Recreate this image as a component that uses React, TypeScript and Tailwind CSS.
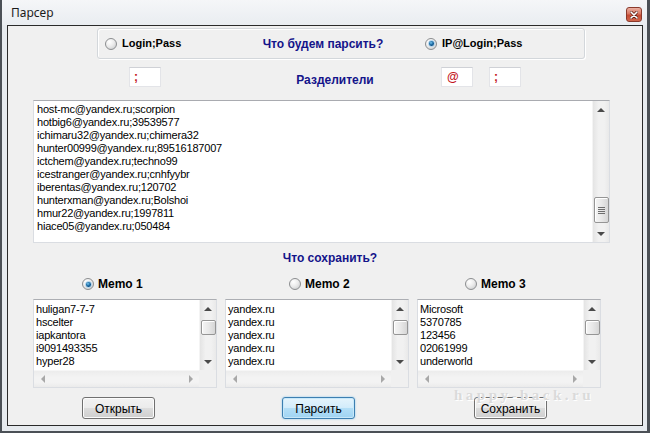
import React from "react";

const bigLines = [
  "host-mc@yandex.ru;scorpion",
  "hotbig6@yandex.ru;39539577",
  "ichimaru32@yandex.ru;chimera32",
  "hunter00999@yandex.ru;89516187007",
  "ictchem@yandex.ru;techno99",
  "icestranger@yandex.ru;cnhfyybr",
  "iberentas@yandex.ru;120702",
  "hunterxman@yandex.ru;Bolshoi",
  "hmur22@yandex.ru;1997811",
  "hiace05@yandex.ru;050484",
];
const memo1 = ["huligan7-7-7", "hscelter", "iapkantora", "i9091493355", "hyper28"];
const memo2 = ["yandex.ru", "yandex.ru", "yandex.ru", "yandex.ru", "yandex.ru"];
const memo3 = ["Microsoft", "5370785", "123456", "02061999", "underworld"];

function Radio({ checked }: { checked?: boolean }) {
  return (
    <span className="flex items-center justify-center w-[12px] h-[12px] rounded-full border border-[#8c8e90] bg-[radial-gradient(circle_at_35%_30%,#ffffff_0%,#ececec_45%,#c4c6c8_100%)] shrink-0">
      {checked && (
        <span className="w-[7px] h-[7px] rounded-full border border-[#a8d0ec] bg-[radial-gradient(circle_at_40%_35%,#7cc8f0_0%,#1b6aa3_45%,#0b3a66_100%)]" />
      )}
    </span>
  );
}

function UpArrow() {
  return <span className="w-0 h-0 border-x-[4px] border-x-transparent border-b-[4px] border-b-[#4a4a4a]" />;
}
function DownArrow() {
  return <span className="w-0 h-0 border-x-[4px] border-x-transparent border-t-[4px] border-t-[#4a4a4a]" />;
}
function LeftArrow() {
  return <span className="w-0 h-0 border-y-[4px] border-y-transparent border-r-[4px] border-r-[#a8a8a8]" />;
}
function RightArrow() {
  return <span className="w-0 h-0 border-y-[4px] border-y-transparent border-l-[4px] border-l-[#a8a8a8]" />;
}

function VScroll({ thumbClass, grip }: { thumbClass: string; grip?: boolean }) {
  return (
    <div className="w-[17px] shrink-0 flex flex-col bg-[linear-gradient(to_right,#e4e4e4,#f1f1f1_35%,#f1f1f1_70%,#e9e9e9)] border-l border-[#f4f4f4]">
      <div className="h-[17px] shrink-0 flex items-center justify-center">
        <UpArrow />
      </div>
      <div className="flex-1 flex flex-col items-center">
        <div
          className={
            "w-[15px] rounded-[2px] border border-[#959595] bg-[linear-gradient(to_right,#f5f5f5,#e8e8e8_50%,#d6d6d6)] shadow-[inset_1px_1px_0_#ffffff] flex flex-col items-center justify-center gap-[1px] " +
            thumbClass
          }
        >
          {grip && (
            <>
              <span className="w-[7px] h-[1px] bg-[#6d6d6d]" />
              <span className="w-[7px] h-[1px] bg-[#6d6d6d]" />
              <span className="w-[7px] h-[1px] bg-[#6d6d6d]" />
              <span className="w-[7px] h-[1px] bg-[#6d6d6d]" />
            </>
          )}
        </div>
      </div>
      <div className="h-[17px] shrink-0 flex items-center justify-center">
        <DownArrow />
      </div>
    </div>
  );
}

function SmallMemo({ lines }: { lines: string[] }) {
  return (
    <div className="w-[184px] h-[89px] border border-[#dadde2] border-t-[#acaeb3] bg-white flex flex-col shrink-0">
      <div className="flex h-[70px]">
        <div className="flex-1 pl-[2px] pt-[3px] text-[11px] leading-[13px] tracking-[-0.2px] text-black overflow-hidden whitespace-nowrap">
          {lines.map((l, i) => (
            <div key={i}>{l}</div>
          ))}
        </div>
        <VScroll thumbClass="mt-[3px] h-[15px]" />
      </div>
      <div className="flex h-[17px]">
        <div className="flex-1 flex bg-[linear-gradient(#ececec,#f3f3f3_40%,#f3f3f3_70%,#ebebeb)] border-t border-[#f6f6f6]">
          <div className="w-[17px] flex items-center justify-center">
            <LeftArrow />
          </div>
          <div className="flex-1" />
          <div className="w-[17px] flex items-center justify-center">
            <RightArrow />
          </div>
        </div>
        <div className="w-[17px] bg-[#f0f0f0]" />
      </div>
    </div>
  );
}

function Btn({ label, primary, cls }: { label: string; primary?: boolean; cls: string }) {
  return (
    <div
      className={
        "w-[73px] h-[22px] pt-[2px] rounded-[3px] border flex items-center justify-center text-[12px] leading-[12px] text-black shrink-0 " +
        (primary
          ? "border-[#3c7fb1] bg-[linear-gradient(#e5f4fc,#d2ecfb_50%,#b4dff7_50%,#9fd4f3)] shadow-[inset_0_0_0_1px_#c8e8f9,0_0_2px_#7fc2ea] "
          : "border-[#707070] bg-[linear-gradient(#f2f2f2,#ebebeb_50%,#dddddd_50%,#cfcfcf)] shadow-[inset_0_0_0_1px_#fcfcfc] ") +
        cls
      }
    >
      {label}
    </div>
  );
}

function SepInput({ ch, cls }: { ch: string; cls: string }) {
  return (
    <div
      className={
        "w-[32px] h-[20px] bg-white border border-[#e3e4e8] border-t-[#cfd1d6] flex items-center text-[12px] font-bold text-[#c3151c] shrink-0 " +
        cls
      }
    >
      {ch}
    </div>
  );
}

export default function App() {
  return (
    <div className="relative w-[650px] h-[433px] overflow-hidden flex flex-col bg-[#e6eaee] border-l-2 border-r-[3px] border-b-2 border-[#4b5056] font-['Liberation_Sans',Arial,sans-serif]">
      {/* title bar */}
      <div className="h-[25px] shrink-0 flex justify-between pl-[9px] pr-[5px] bg-[linear-gradient(#f5f6f8,#e9edf1)]">
        <span className="self-center text-[12px] text-[#1b1b1b] font-['Noto_Sans',sans-serif] leading-none">Парсер</span>
        <div className="mt-[7px] w-[16px] h-[15px] rounded-[3px] border border-[#8a3a2c] bg-[linear-gradient(#eab0a2,#d77560_45%,#c44a32_55%,#d0664c)] flex items-center justify-center">
          <svg width="8" height="8" viewBox="0 0 8 8">
            <path d="M1 1 L7 7 M7 1 L1 7" stroke="#5a1a10" strokeWidth="3" strokeLinecap="round" />
            <path d="M1 1 L7 7 M7 1 L1 7" stroke="#ffffff" strokeWidth="1.6" strokeLinecap="round" />
          </svg>
        </div>
      </div>

      {/* client */}
      <div className="ml-[5px] w-[636px] h-[401px] shrink-0 border border-[#2a2a2a] bg-[#f0f0f0] flex flex-col">
        {/* group box */}
        <div className="ml-[89px] mt-[2px] w-[488px] h-[31px] shrink-0 rounded-[3px] border border-[#d3d7db] shadow-[inset_1px_1px_0_#ffffff,1px_1px_0_#ffffff] flex items-center pl-[7px]">
          <div className="w-[138px] flex items-center gap-[5px]">
            <Radio />
            <span className="text-[11px] font-bold text-black">Login;Pass</span>
          </div>
          <div className="w-[160px] text-center text-[12px] font-bold text-[#14148a]">Что будем парсить?</div>
          <div className="ml-[22px] flex items-center gap-[5px]">
            <Radio checked />
            <span className="text-[11px] font-bold text-black">IP@Login;Pass</span>
          </div>
        </div>

        {/* separators */}
        <div className="mt-[8px] h-[20px] shrink-0 flex items-start pl-[121px]">
          <SepInput ch=";" cls="pl-[4px]" />
          <div className="ml-[74px] w-[200px] mt-[6px] text-center text-[12px] leading-[14px] font-bold text-[#14148a]">Разделители</div>
          <SepInput ch="@" cls="ml-[6px] pl-[5px]" />
          <SepInput ch=";" cls="ml-[16px] pl-[4px]" />
        </div>

        {/* big memo */}
        <div className="mt-[13px] ml-[25px] w-[577px] h-[143px] shrink-0 border border-[#dadde2] border-t-[#a9abb0] bg-white flex">
          <div className="flex-1 pl-[3px] pt-[2px] text-[11px] leading-[13px] tracking-[-0.2px] text-black overflow-hidden whitespace-nowrap">
            {bigLines.map((l, i) => (
              <div key={i}>{l}</div>
            ))}
          </div>
          <VScroll thumbClass="mt-[79px] h-[26px]" grip />
        </div>

        {/* what to save */}
        <div className="mt-[8px] ml-[222px] w-[200px] text-center text-[12px] leading-[14px] font-bold text-[#14148a] shrink-0">
          Что сохранить?
        </div>

        {/* memo radios */}
        <div className="mt-[12px] h-[14px] shrink-0 flex items-center">
          <div className="ml-[74px] w-[207px] flex items-center gap-[4px]">
            <Radio checked />
            <span className="text-[12px] font-bold text-black">Memo 1</span>
          </div>
          <div className="w-[176px] flex items-center gap-[4px]">
            <Radio />
            <span className="text-[12px] font-bold text-black">Memo 2</span>
          </div>
          <div className="flex items-center gap-[4px]">
            <Radio />
            <span className="text-[12px] font-bold text-black">Memo 3</span>
          </div>
        </div>

        {/* memos */}
        <div className="mt-[8px] ml-[25px] flex gap-[8px] shrink-0">
          <SmallMemo lines={memo1} />
          <SmallMemo lines={memo2} />
          <SmallMemo lines={memo3} />
        </div>

        {/* buttons */}
        <div className="mt-[9px] ml-[74px] flex shrink-0">
          <Btn label="Открыть" cls="" />
          <Btn label="Парсить" primary cls="ml-[127px]" />
          <Btn label="Сохранить" cls="ml-[119px]" />
        </div>
      </div>

      {/* watermark */}
      <div className="pointer-events-none absolute left-[452px] top-[390px] text-[15px] leading-[11px] tracking-[3.5px] font-bold font-['Liberation_Serif',serif] text-[#dadada] [text-shadow:1px_1px_0_#ffffff]">
        happy-back.ru
      </div>
    </div>
  );
}
